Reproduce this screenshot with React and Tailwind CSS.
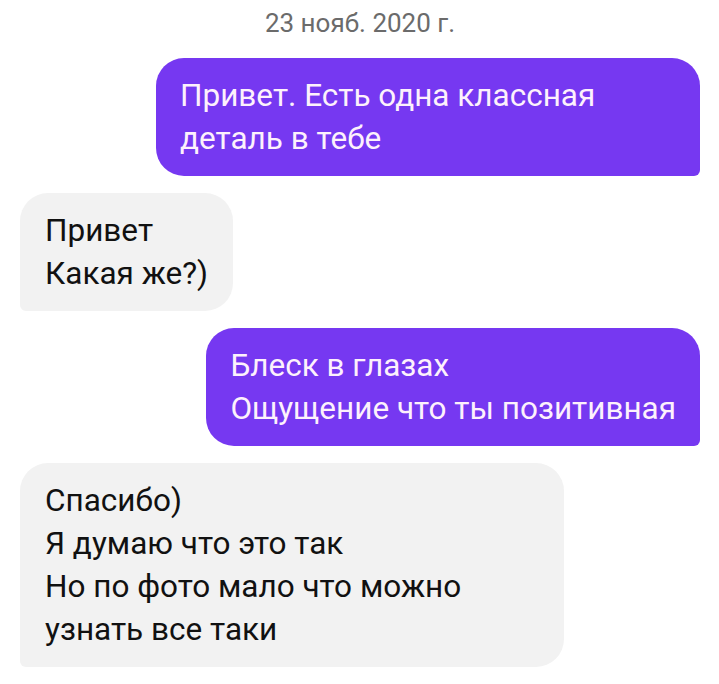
const messages = [
  { out: true, text: "Привет. Есть одна классная деталь в тебе" },
  { out: false, text: "Привет\nКакая же?)" },
  { out: true, text: "Блеск в глазах\nОщущение что ты позитивная" },
  { out: false, text: "Спасибо)\nЯ думаю что это так\nНо по фото мало что можно узнать все таки" },
];

function Bubble({ out, text }) {
  return (
    <div className={out ? "flex justify-end" : "flex justify-start"}>
      <div
        className={
          out
            ? "max-w-[544px] whitespace-pre-line rounded-[28px] rounded-br-[6px] bg-[#7638f1] px-[24px] py-[16px] text-[31.5px] leading-[43px] text-[#fdf1fc]"
            : "max-w-[544px] whitespace-pre-line rounded-[28px] rounded-bl-[6px] bg-[#f2f2f2] px-[25px] py-[16px] text-[31.5px] leading-[43px] text-[#111111]"
        }
      >
        {text}
      </div>
    </div>
  );
}

export default function App() {
  return (
    <div
      className="min-h-screen bg-white pl-[20px] pr-[19px]"
      style={{ fontFamily: "Roboto, 'Noto Sans', sans-serif" }}
    >
      <div className="pt-[8px] pb-[20px] text-center text-[26px] leading-[30px] text-[#6b6b6b]">
        23 нояб. 2020 г.
      </div>
      <div className="flex flex-col gap-[17px]">
        {messages.map((m, i) => (
          <Bubble key={i} out={m.out} text={m.text} />
        ))}
      </div>
    </div>
  );
}
